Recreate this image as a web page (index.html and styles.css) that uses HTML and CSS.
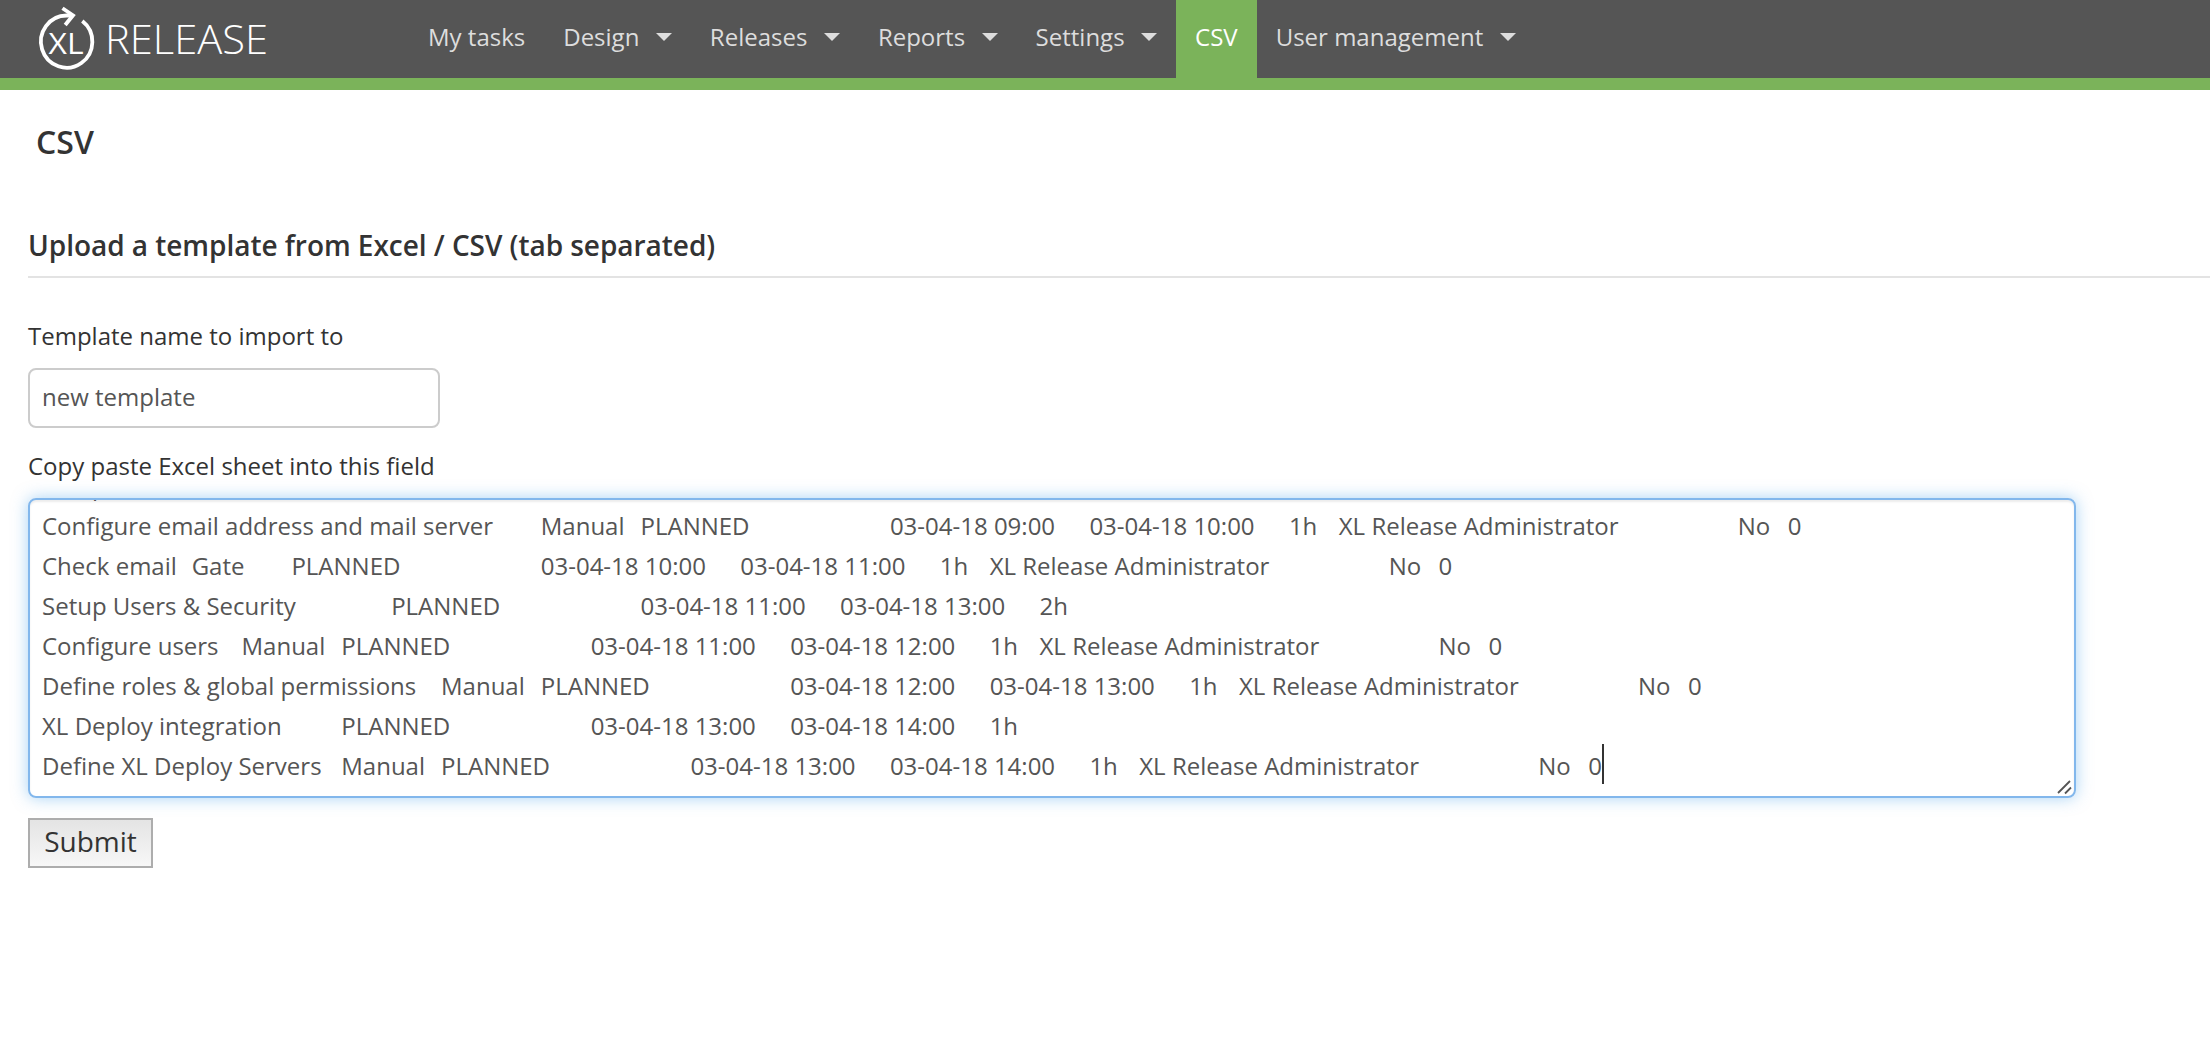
FILE: index.html
```html
<!DOCTYPE html>
<html lang="en">
<head>
<meta charset="utf-8">
<title>XL Release - CSV</title>
<link rel="stylesheet" href="styles.css">
</head>
<body>
<header class="topbar">
  <a class="brand">
    <svg class="logo" viewBox="0 0 240 78" width="240" height="78" fill="none" stroke="#fff" stroke-width="3.8">
      <path d="M72 15.500H66.700A25.700 26.100 0 1 0 82.300 20.900"/>
      <path d="M62.500 8.200 73 15.300 65.200 25"/>
      <text class="logo-mark" x="48.5" y="54.3" textLength="35" lengthAdjust="spacingAndGlyphs">XL</text>
      <text class="logo-name" x="105" y="54.3" textLength="163" lengthAdjust="spacingAndGlyphs">RELEASE</text>
    </svg>
  </a>
  <nav class="menu">
    <a class="item">My tasks</a>
    <a class="item">Design<i class="caret"></i></a>
    <a class="item">Releases<i class="caret"></i></a>
    <a class="item">Reports<i class="caret"></i></a>
    <a class="item">Settings<i class="caret"></i></a>
    <a class="item active">CSV</a>
    <a class="item">User management<i class="caret"></i></a>
  </nav>
</header>
<main class="content">
  <h1 class="page-title">CSV</h1>
  <h2 class="section-title">Upload a template from Excel / CSV (tab separated)</h2>
  <form class="form">
    <label class="label" for="name">Template name to import to</label>
    <input class="input" id="name" type="text" value="new template">
    <label class="label sheet-label">Copy paste Excel sheet into this field</label>
    <div class="sheet" role="textbox" aria-multiline="true">
      <pre class="rows">Setup email
Configure email address and mail server&#9;Manual&#9;PLANNED&#9;&#9;&#9;03-04-18 09:00&#9;03-04-18 10:00&#9;1h&#9;XL Release Administrator&#9;&#9;&#9;No&#9;0
Check email&#9;Gate&#9;PLANNED&#9;&#9;&#9;03-04-18 10:00&#9;03-04-18 11:00&#9;1h&#9;XL Release Administrator&#9;&#9;&#9;No&#9;0
Setup Users &amp; Security&#9;&#9;PLANNED&#9;&#9;&#9;03-04-18 11:00&#9;03-04-18 13:00&#9;2h
Configure users&#9;Manual&#9;PLANNED&#9;&#9;&#9;03-04-18 11:00&#9;03-04-18 12:00&#9;1h&#9;XL Release Administrator&#9;&#9;&#9;No&#9;0
Define roles &amp; global permissions&#9;Manual&#9;PLANNED&#9;&#9;&#9;03-04-18 12:00&#9;03-04-18 13:00&#9;1h&#9;XL Release Administrator&#9;&#9;&#9;No&#9;0
XL Deploy integration&#9;&#9;PLANNED&#9;&#9;&#9;03-04-18 13:00&#9;03-04-18 14:00&#9;1h
Define XL Deploy Servers&#9;Manual&#9;PLANNED&#9;&#9;&#9;03-04-18 13:00&#9;03-04-18 14:00&#9;1h&#9;XL Release Administrator&#9;&#9;&#9;No&#9;0<span class="cursor"></span></pre>
      <svg class="grip" width="16" height="16" viewBox="0 0 16 16" stroke="#555" stroke-width="1.8"><path d="M1 14 13 2M8 14.500 14 8.500"/></svg>
    </div>
    <button class="submit" type="button">Submit</button>
  </form>
</main>
</body>
</html>
```
FILE: styles.css
```css
* { box-sizing: border-box; }
body {
  margin: 0;
  background: #fff;
  color: #333;
  font: 24px/40px "Open Sans", sans-serif;
  overflow: hidden;
}
.topbar {
  display: flex;
  height: 90px;
  background: #555;
  border-bottom: 12px solid #7bb35a;
}
.brand { width: 409px; height: 78px; }
.logo { display: block; overflow: visible; }
.logo text { fill: #fff; stroke: none; font-family: "Open Sans", sans-serif; }
.logo-mark { font-size: 30px; font-weight: 400; }
.logo-name { font-size: 41px; font-weight: 300; }
.menu { display: flex; }
.item {
  display: flex;
  height: 78px;
  padding: 0 19px 4px 19px;
  align-items: center;
  color: #ddd;
  white-space: nowrap;
}
.active { background: #7bb35a; color: #fff; }
.caret {
  margin-left: 16.5px;
  border: 8px solid transparent;
  border-top-color: #ddd;
  border-bottom: 0;
}
.content { padding: 28px 0 0 28px; }
.page-title {
  margin: 0;
  padding-left: 8px;
  font-size: 32px;
  font-weight: 600;
  line-height: 48px;
}
.section-title {
  margin: 59px 0 0;
  height: 53px;
  border-bottom: 2px solid #e3e3e3;
  font-size: 28px;
  font-weight: 600;
  line-height: 40px;
  letter-spacing: -.04px;
}
.form {
  display: flex;
  flex-direction: column;
  align-items: flex-start;
  padding-top: 38px;
}
.label { height: 52px; }
.input {
  width: 412px;
  height: 60px;
  padding: 0 12px 4px;
  border: 2px solid #ccc;
  border-radius: 8px;
  color: #555;
  font: inherit;
}
.sheet-label { margin-top: 18px; }
.sheet {
  position: relative;
  width: 2048px;
  height: 300px;
  padding: 0 12px;
  border: 2px solid #82b7ec;
  border-radius: 8px;
  box-shadow: inset 0 2px 2px rgba(0, 0, 0, .075), 0 0 16px rgba(82, 168, 236, .5);
  overflow: hidden;
}
.rows {
  margin: -34px 0 0;
  color: #555;
  font: inherit;
  tab-size: 8;
}
.cursor {
  display: inline-block;
  width: 2px;
  height: 40px;
  margin-top: -2px;
  background: #333;
  vertical-align: top;
}
.grip { position: absolute; right: 1px; bottom: 1px; }
.submit {
  width: 125px;
  height: 50px;
  margin-top: 20px;
  padding: 0 0 5px;
  border: 2px solid #adadad;
  background: linear-gradient(#e4e4e4, #f7f7f7);
  color: #333;
  font: 28px/40px "Open Sans", sans-serif;
}
```
